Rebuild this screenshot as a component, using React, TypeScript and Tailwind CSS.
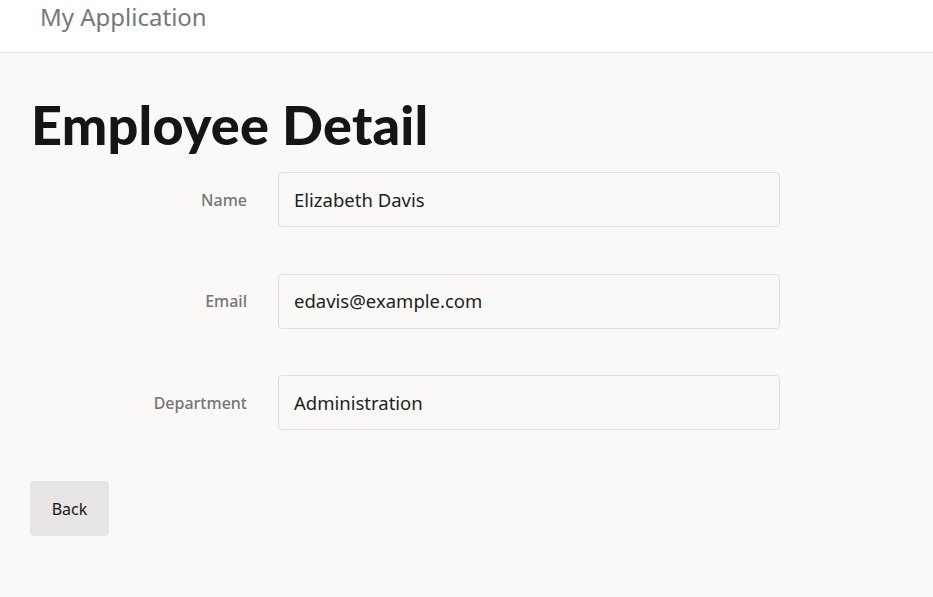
import React from "react";

const fields = [
  { label: "Name", value: "Elizabeth Davis" },
  { label: "Email", value: "edavis@example.com" },
  { label: "Department", value: "Administration" },
];

export default function App() {
  return (
    <div className="min-h-[597px] bg-[#faf9f8] font-['Noto_Sans',sans-serif]">
      {/* Header */}
      <header className="h-[53px] bg-white border-b border-[#e5e5e5] pl-[40px]">
        <div className="text-[24px] leading-[34px] text-[#777777]">My Application</div>
      </header>

      <main className="px-[30px]">
        <h1 className="mt-[37px] pl-[1px] font-['Lato',sans-serif] font-black text-[54px] leading-[70px] text-[#161514] tracking-[0.2px]">
          Employee Detail
        </h1>

        {/* Fields */}
        <div className="mt-[12px] flex flex-col gap-[46.5px]">
          {fields.map((f) => (
            <div key={f.label} className="flex items-center">
              <label className="w-[217px] text-right text-[16px] font-medium text-[#757575]">
                {f.label}
              </label>
              <div className="ml-[31px] w-[502px] h-[55px] flex items-center px-[15px] border border-[#e1dfdd] rounded-[4px] bg-[#faf9f8] text-[18.5px] text-[#201f1e]">
                {f.value}
              </div>
            </div>
          ))}
        </div>

        <button className="mt-[51px] w-[79px] h-[55px] rounded-[4px] bg-[#e7e6e5] text-[16px] text-[#161514]">
          Back
        </button>
      </main>
    </div>
  );
}
